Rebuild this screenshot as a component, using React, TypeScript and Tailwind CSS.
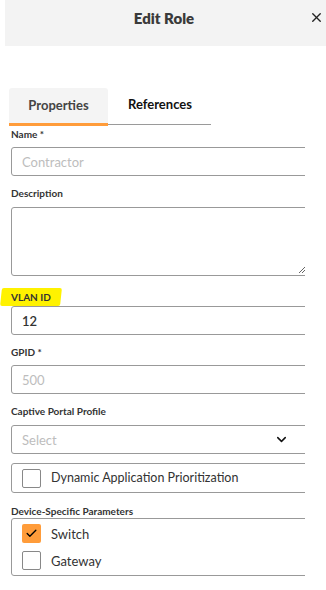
import { X, ChevronDown, Check } from "lucide-react";

const Label = ({ children, className = "" }: { children: React.ReactNode; className?: string }) => (
  <div className={`h-[12px] text-[10px] font-bold text-[#333] leading-[12px] ${className}`}>{children}</div>
);

const Box = ({ checked }: { checked?: boolean }) =>
  checked ? (
    <span className="w-[19px] h-[19px] rounded-[2px] bg-[#ff9c3a] flex items-center justify-center">
      <Check size={13} strokeWidth={2.5} className="text-black" />
    </span>
  ) : (
    <span className="w-[19px] h-[19px] rounded-[2px] border border-[#888] bg-white" />
  );

const field = "w-[320px] h-[29px] border border-[#999] rounded-[3px] flex items-center px-[10px] text-[13px] leading-[16px]";

const App = () => {
  return (
    <div className="w-[326px] h-[590px] bg-white overflow-hidden" style={{ fontFamily: "Lato, 'Open Sans', sans-serif" }}>
      <header className="ml-[5px] h-[46px] bg-[#f3f3f3] relative pt-[9px]">
        <h1 className="w-full text-center pr-[3px] text-[15px] leading-[18px] font-extrabold text-[#3a3a3a]">Edit Role</h1>
        <X size={15} strokeWidth={2.2} className="absolute right-[2px] top-[10px] text-[#222]" />
      </header>

      <div className="pt-[42px] pl-[9px]">
        <div className="flex w-[202px] border-b border-[#9a9a9a] h-[37px]">
          <div className="w-[99px] bg-[#f4f4f4] rounded-t-[3px] border-b-[3px] border-[#ff9c3a] -mb-[2px] flex items-center justify-center text-[13px] font-bold text-[#444]">
            Properties
          </div>
          <div className="ml-[20px] flex items-center text-[13px] font-bold text-[#111] pb-[2px]">References</div>
        </div>
      </div>

      <div className="w-[305px] overflow-hidden pl-[11px] pt-[3px]">
        <Label>Name *</Label>
        <div className={`mt-[7px] ${field} text-[#bdbdbd]`}>Contractor</div>

        <Label className="mt-[11px]">Description</Label>
        <div className="mt-[8px] w-[320px] h-[69px] border border-[#999] rounded-[3px] relative">
          {/* resize grip */}
          <svg width="7" height="7" viewBox="0 0 7 7" className="absolute right-[25px] bottom-[2px]">
            <path d="M1 7 L7 1 M4 7 L7 4" stroke="#666" strokeWidth="1" />
          </svg>
        </div>

        <div className="mt-[7px] -ml-[10px] h-[18px]">
          <span className="inline-flex items-center h-[18px] bg-[#fff200] -skew-x-6 px-[10px] rounded-[2px]">
            <span className="inline-block skew-x-6 text-[10px] leading-[12px] font-bold text-[#333]">VLAN ID</span>
          </span>
        </div>
        <div className={`mt-[5px] ${field} font-semibold text-[#333]`}>12</div>

        <Label className="mt-[11px]">GPID *</Label>
        <div className={`mt-[7px] ${field} text-[#bdbdbd]`}>500</div>

        <Label className="mt-[11px]">Captive Portal Profile</Label>
        <div className={`mt-[8px] ${field} text-[#bdbdbd]`}>
          <span className="flex-1">Select</span>
          <ChevronDown size={15} strokeWidth={2.4} className="text-[#111] mr-[31px]" />
        </div>

        <div className="mt-[9px] w-[320px] h-[30px] border border-[#999] rounded-[3px] flex items-center pl-[10px] gap-[10px] text-[12.5px] leading-[16px] text-[#333]">
          <Box />
          <span>Dynamic Application Prioritization</span>
        </div>

        <Label className="mt-[12px]">Device-Specific Parameters</Label>
        <div className="mt-[1px] w-[320px] h-[58px] border border-[#999] rounded-[3px] flex flex-col justify-center pl-[10px] gap-[8px] text-[13px] leading-[16px] text-[#333]">
          <div className="flex items-center gap-[10px]"><Box checked /><span>Switch</span></div>
          <div className="flex items-center gap-[10px]"><Box /><span>Gateway</span></div>
        </div>
      </div>
    </div>
  );
};

export default App;
